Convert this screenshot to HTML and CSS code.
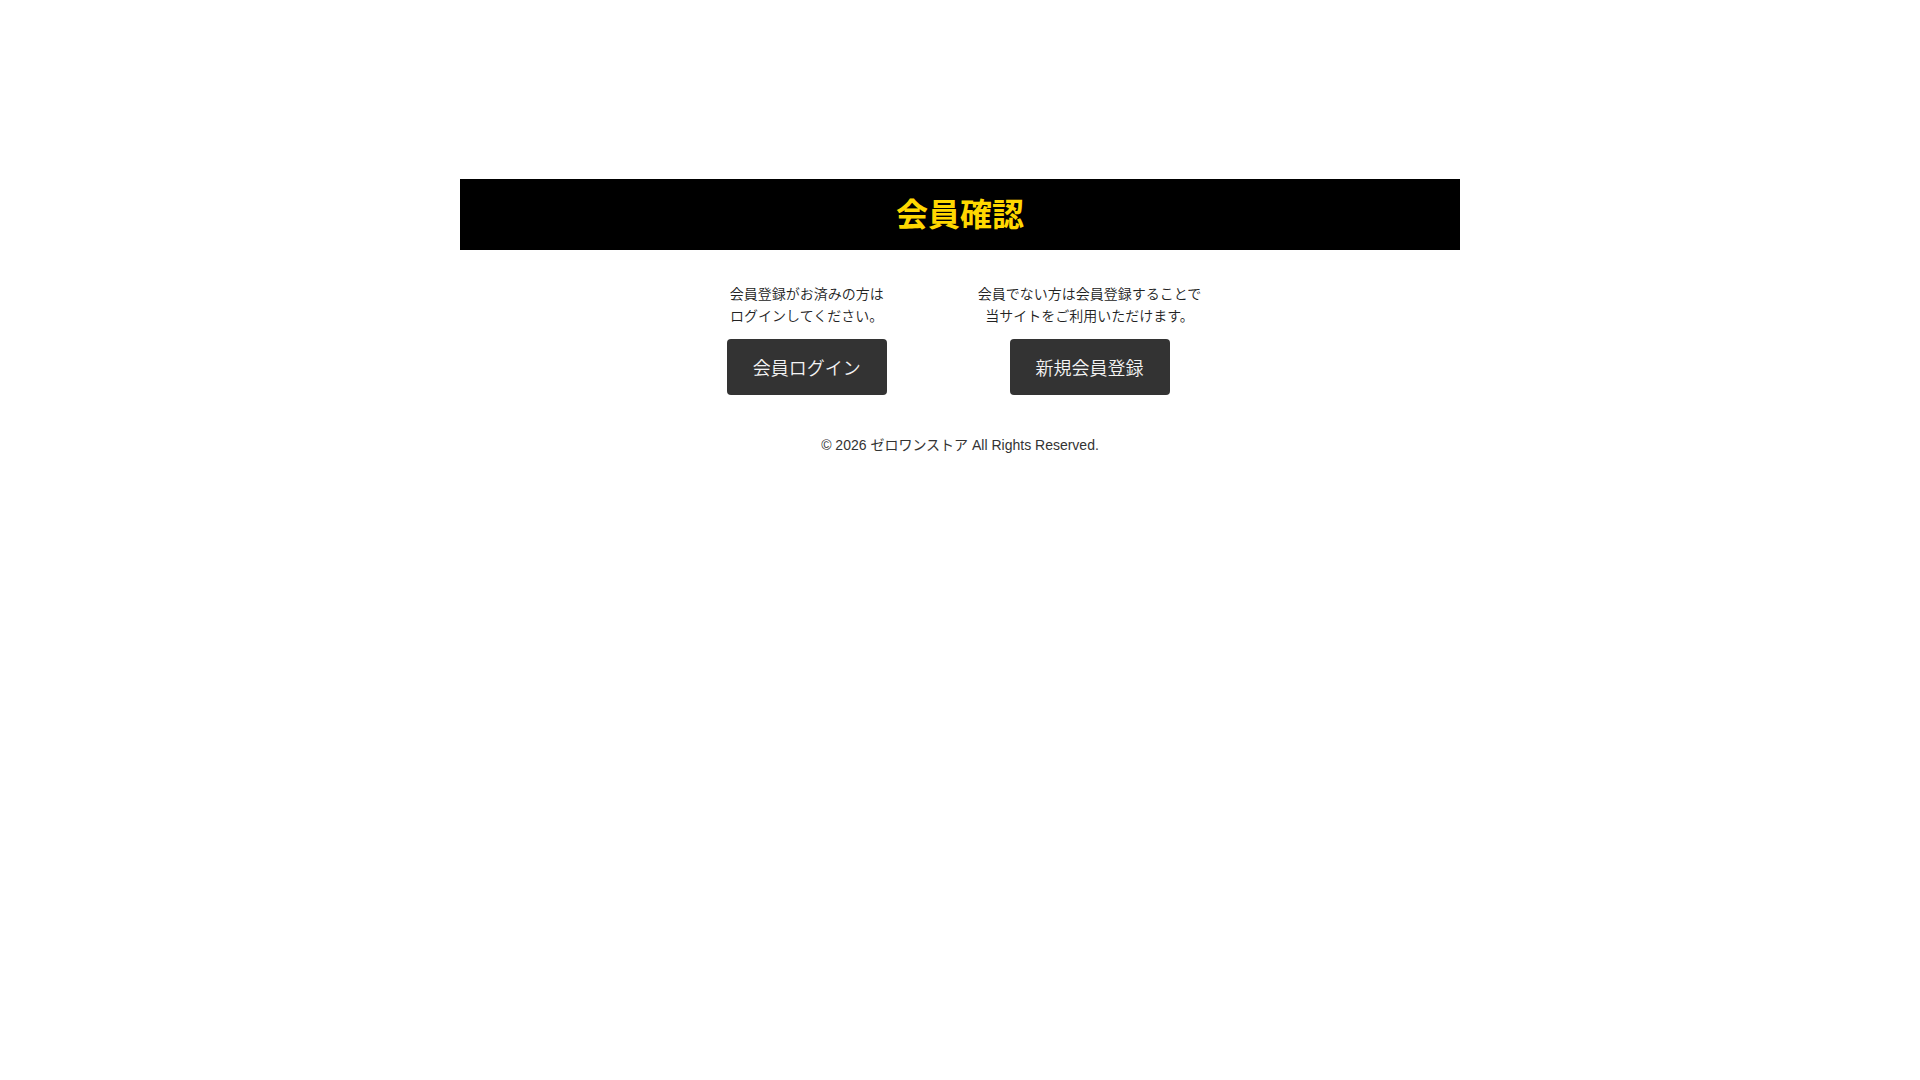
FILE: index.html
```html
<!DOCTYPE html>
<html lang="ja">
<head>
<meta charset="utf-8">
<title>会員確認</title>
<link rel="stylesheet" href="styles.css">
</head>
<body>
<div class="page">
  <header class="header">
    <h1 class="title">会員確認</h1>
  </header>
  <div class="choices">
    <div class="col">
      <p class="lead">会員登録がお済みの方は<br>ログインしてください。</p>
      <a class="btn" href="#">会員ログイン</a>
    </div>
    <div class="col">
      <p class="lead">会員でない方は会員登録することで<br>当サイトをご利用いただけます。</p>
      <a class="btn" href="#">新規会員登録</a>
    </div>
  </div>
  <footer class="footer">© 2026 ゼロワンストア All Rights Reserved.</footer>
</div>
</body>
</html>
```

FILE: styles.css
```css
html, body {
  margin: 0;
  padding: 0;
  background: #fff;
}
body {
  font-family: "Liberation Sans", "Noto Sans CJK JP", sans-serif;
  color: #333;
}
.page {
  padding-top: 179px;
}
.header {
  width: 1000px;
  height: 71px;
  margin: 0 auto;
  background: #000;
  display: flex;
  align-items: center;
  justify-content: center;
}
.title {
  margin: 0 0 5px;
  font-family: "Noto Sans CJK JP", sans-serif;
  font-size: 32px;
  font-weight: 700;
  line-height: 1;
  color: #ffd700;
}
.choices {
  display: flex;
  justify-content: center;
  gap: 91px;
  padding-left: 8px;
  margin-top: 33px;
}
.col {
  display: flex;
  flex-direction: column;
  align-items: center;
  text-align: center;
}
.lead {
  margin: 0 0 11px;
  font-size: 14px;
  font-weight: 350;
  line-height: 1.6;
  color: #222;
}
.btn {
  width: 160px;
  height: 56px;
  display: flex;
  align-items: center;
  justify-content: center;
  background: #333;
  color: #f4f4f4;
  font-family: "Noto Sans CJK JP", sans-serif;
  font-size: 18px;
  font-weight: 350;
  text-decoration: none;
  border-radius: 4px;
}
.footer {
  margin-top: 39px;
  text-align: center;
  font-size: 14px;
  line-height: 1.6;
  color: #333;
}
```
